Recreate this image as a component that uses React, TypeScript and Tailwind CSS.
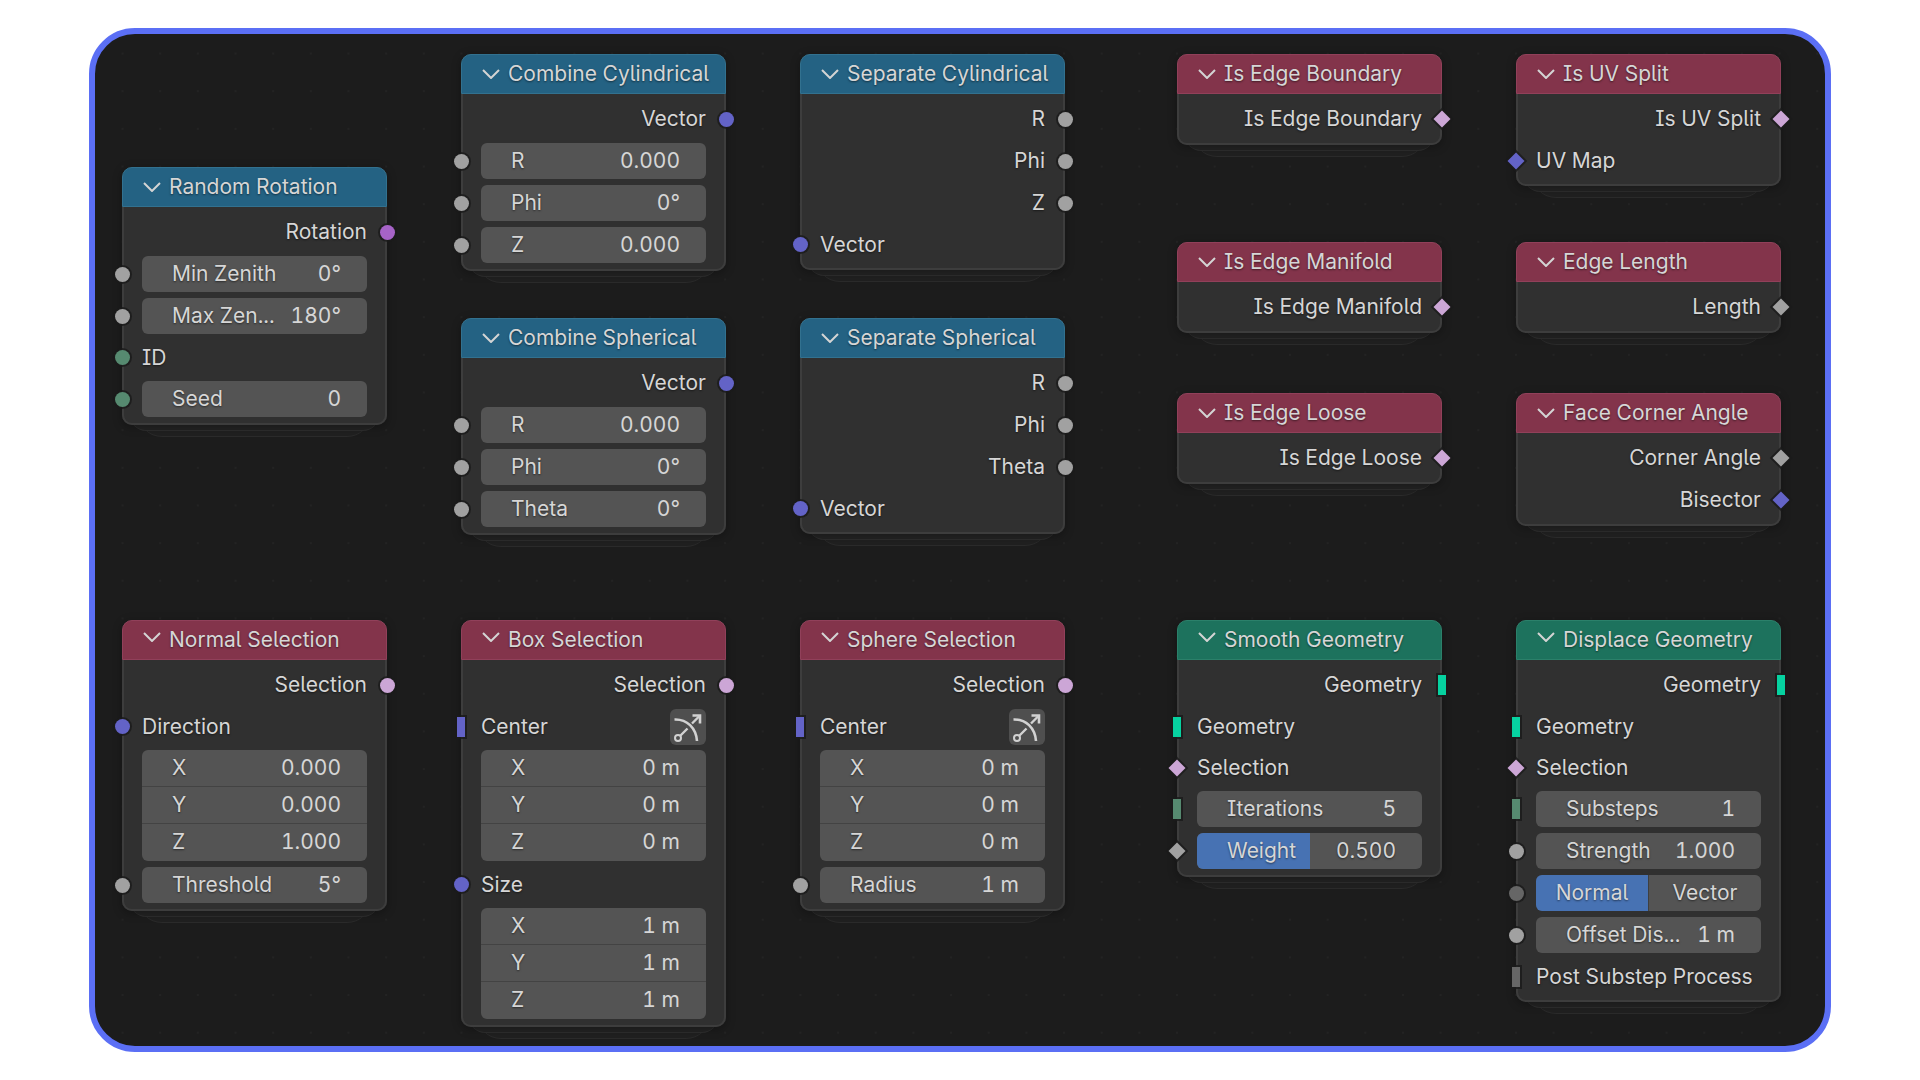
import type React from "react"
import { useId, useState } from "react"
import clsx from "clsx"

type Kind = "float" | "int" | "bool" | "vector" | "rotation" | "geometry" | "menu"
type Shape = "circle" | "diamond" | "bar"

interface SocketType {
  kind: Kind
  shape: Shape
}

type Row =
  | { type: "output"; label: string; socket: SocketType }
  | { type: "input"; label: string; socket: SocketType; gizmo?: boolean }
  | { type: "field"; label: string; value: string; socket: SocketType }
  | { type: "slider"; label: string; value: number; socket: SocketType }
  | { type: "xyz"; values: string[] }
  | { type: "choice"; options: string[]; socket: SocketType }

interface NodeData {
  title: string
  color: "blue" | "red" | "green"
  x: number
  y: number
  raised?: boolean
  rows: Row[]
}

const s = (kind: Kind, shape: Shape = "circle"): SocketType => ({ kind, shape })
const out = (label: string, socket: SocketType): Row => ({ type: "output", label, socket })
const inp = (label: string, socket: SocketType, gizmo = false): Row => ({ type: "input", label, socket, gizmo })
const field = (label: string, value: string, socket: SocketType): Row => ({ type: "field", label, value, socket })
const xyz = (...values: string[]): Row => ({ type: "xyz", values })

const nodes: NodeData[] = [
  {
    title: "Random Rotation",
    color: "blue",
    x: 27,
    y: 133,
    rows: [
      out("Rotation", s("rotation")),
      field("Min Zenith", "0°", s("float")),
      field("Max Zen...", "180°", s("float")),
      inp("ID", s("int")),
      field("Seed", "0", s("int")),
    ],
  },
  {
    title: "Combine Cylindrical",
    color: "blue",
    x: 366,
    y: 20,
    rows: [
      out("Vector", s("vector")),
      field("R", "0.000", s("float")),
      field("Phi", "0°", s("float")),
      field("Z", "0.000", s("float")),
    ],
  },
  {
    title: "Combine Spherical",
    color: "blue",
    x: 366,
    y: 284,
    rows: [
      out("Vector", s("vector")),
      field("R", "0.000", s("float")),
      field("Phi", "0°", s("float")),
      field("Theta", "0°", s("float")),
    ],
  },
  {
    title: "Separate Cylindrical",
    color: "blue",
    x: 705,
    y: 20,
    rows: [out("R", s("float")), out("Phi", s("float")), out("Z", s("float")), inp("Vector", s("vector"))],
  },
  {
    title: "Separate Spherical",
    color: "blue",
    x: 705,
    y: 284,
    rows: [out("R", s("float")), out("Phi", s("float")), out("Theta", s("float")), inp("Vector", s("vector"))],
  },
  { title: "Is Edge Boundary", color: "red", x: 1082, y: 20, rows: [out("Is Edge Boundary", s("bool", "diamond"))] },
  { title: "Is Edge Manifold", color: "red", x: 1082, y: 208, rows: [out("Is Edge Manifold", s("bool", "diamond"))] },
  { title: "Is Edge Loose", color: "red", x: 1082, y: 359, rows: [out("Is Edge Loose", s("bool", "diamond"))] },
  {
    title: "Is UV Split",
    color: "red",
    x: 1421,
    y: 20,
    rows: [out("Is UV Split", s("bool", "diamond")), inp("UV Map", s("vector", "diamond"))],
  },
  { title: "Edge Length", color: "red", x: 1421, y: 208, rows: [out("Length", s("float", "diamond"))] },
  {
    title: "Face Corner Angle",
    color: "red",
    x: 1421,
    y: 359,
    rows: [out("Corner Angle", s("float", "diamond")), out("Bisector", s("vector", "diamond"))],
  },
  {
    title: "Normal Selection",
    color: "red",
    x: 27,
    y: 586,
    raised: true,
    rows: [
      out("Selection", s("bool")),
      inp("Direction", s("vector")),
      xyz("0.000", "0.000", "1.000"),
      field("Threshold", "5°", s("float")),
    ],
  },
  {
    title: "Box Selection",
    color: "red",
    x: 366,
    y: 586,
    raised: true,
    rows: [
      out("Selection", s("bool")),
      inp("Center", s("vector", "bar"), true),
      xyz("0 m", "0 m", "0 m"),
      inp("Size", s("vector")),
      xyz("1 m", "1 m", "1 m"),
    ],
  },
  {
    title: "Sphere Selection",
    color: "red",
    x: 705,
    y: 586,
    raised: true,
    rows: [
      out("Selection", s("bool")),
      inp("Center", s("vector", "bar"), true),
      xyz("0 m", "0 m", "0 m"),
      field("Radius", "1 m", s("float")),
    ],
  },
  {
    title: "Smooth Geometry",
    color: "green",
    x: 1082,
    y: 586,
    raised: true,
    rows: [
      out("Geometry", s("geometry", "bar")),
      inp("Geometry", s("geometry", "bar")),
      inp("Selection", s("bool", "diamond")),
      field("Iterations", "5", s("int", "bar")),
      { type: "slider", label: "Weight", value: 0.5, socket: s("float", "diamond") },
    ],
  },
  {
    title: "Displace Geometry",
    color: "green",
    x: 1421,
    y: 586,
    raised: true,
    rows: [
      out("Geometry", s("geometry", "bar")),
      inp("Geometry", s("geometry", "bar")),
      inp("Selection", s("bool", "diamond")),
      field("Substeps", "1", s("int", "bar")),
      field("Strength", "1.000", s("float")),
      { type: "choice", options: ["Normal", "Vector"], socket: s("menu") },
      field("Offset Dis...", "1 m", s("float")),
      inp("Post Substep Process", s("menu", "bar")),
    ],
  },
]

const socketColors: Record<Kind, string> = {
  float: "bg-[#a1a1a1]",
  int: "bg-[#568a70]",
  bool: "bg-[#cca6d6]",
  vector: "bg-[#6363c7]",
  rotation: "bg-[#a663c7]",
  geometry: "bg-[#06d2a0]",
  menu: "bg-[#666666]",
}

const socketShapes: Record<Shape, string> = {
  circle: "size-[15px] rounded-full",
  diamond: "size-3 rotate-45",
  bar: "h-5 w-2",
}

const headerColors = {
  blue: "bg-[#246283] border-[#32718f]",
  red: "bg-[#83344b] border-[#91405a]",
  green: "bg-[#1d725d] border-[#2b806a]",
}

function Socket({ socket, side }: { socket: SocketType; side: "left" | "right" }) {
  return (
    <span
      className={clsx(
        "absolute inset-y-0 flex w-5 items-center justify-center",
        side === "left" ? "-left-[30px]" : "-right-[30px]",
      )}
    >
      <span className={clsx("ring-2 ring-[#1a1a1a]/80", socketColors[socket.kind], socketShapes[socket.shape])} />
    </span>
  )
}

function NumberField({ label, value, className }: { label: string; value: string; className?: string }) {
  const [text, setText] = useState(value)
  return (
    <label className={clsx("flex items-center justify-between bg-[#545454] pr-[26px] pl-[30px]", className)}>
      <span className="whitespace-nowrap">{label}</span>
      <input
        type="text"
        value={text}
        onChange={(e: React.ChangeEvent<HTMLInputElement>) => setText(e.target.value)}
        className="field-sizing-content bg-transparent text-right outline-none"
      />
    </label>
  )
}

function SliderField({ label, value }: { label: string; value: number }) {
  const [amount, setAmount] = useState(value)
  return (
    <label className="relative flex h-9 items-center justify-between overflow-hidden rounded-md bg-[#545454] pr-[26px] pl-[30px]">
      <span className="absolute inset-y-0 left-0 bg-[#4772b3]" style={{ width: `${amount * 100}%` }} />
      <span className="relative">{label}</span>
      <span className="relative">{amount.toFixed(3)}</span>
      <input
        type="range"
        min={0}
        max={1}
        step={0.001}
        value={amount}
        onChange={(e) => setAmount(Number(e.target.value))}
        className="absolute inset-0 size-full cursor-ew-resize opacity-0"
      />
    </label>
  )
}

function ChoiceField({ options }: { options: string[] }) {
  const name = useId()
  const [selected, setSelected] = useState(options[0])
  return (
    <div role="radiogroup" className="flex h-9 gap-px overflow-hidden rounded-md bg-[#3f3f3f]">
      {options.map((option) => (
        <label
          key={option}
          className={clsx(
            "relative flex flex-1 items-center justify-center",
            option === selected ? "bg-[#4772b3]" : "bg-[#545454]",
          )}
        >
          <input
            type="radio"
            name={name}
            checked={option === selected}
            onChange={() => setSelected(option)}
            className="absolute inset-0 opacity-0"
          />
          {option}
        </label>
      ))}
    </div>
  )
}

function GizmoIcon() {
  return (
    <svg viewBox="0 0 36 36" className="size-9" fill="none" stroke="#d2d2d2" strokeWidth="2">
      <path d="M4.5 10.5C17 10 26 19 27 32" strokeWidth="2.6" />
      <circle cx="8" cy="29" r="3" />
      <path d="M10.5 26.5 17.5 19.5M22 14.5 29.5 7" strokeWidth="2.4" />
      <path d="M22.5 6.5H30V14.500" strokeWidth="2.6" />
    </svg>
  )
}

function NodeRow({ row }: { row: Row }) {
  switch (row.type) {
    case "output":
      return (
        <div className="relative flex h-9 items-center justify-end whitespace-nowrap">
          {row.label}
          <Socket socket={row.socket} side="right" />
        </div>
      )
    case "input":
      return (
        <div className="relative flex h-[35px] items-center justify-between whitespace-nowrap">
          <Socket socket={row.socket} side="left" />
          {row.label}
          {row.gizmo && (
            <button type="button" aria-label="Pin gizmo" className="rounded-md bg-[#4f4f4f]">
              <GizmoIcon />
            </button>
          )}
        </div>
      )
    case "field":
      return (
        <div className="relative">
          <Socket socket={row.socket} side="left" />
          <NumberField label={row.label} value={row.value} className="h-9 rounded-md" />
        </div>
      )
    case "slider":
      return (
        <div className="relative">
          <Socket socket={row.socket} side="left" />
          <SliderField label={row.label} value={row.value} />
        </div>
      )
    case "choice":
      return (
        <div className="relative">
          <Socket socket={row.socket} side="left" />
          <ChoiceField options={row.options} />
        </div>
      )
    case "xyz":
      return (
        <div className="overflow-hidden rounded-md">
          {row.values.map((value, i) => (
            <NumberField
              key={i}
              label={"XYZ"[i]}
              value={value}
              className="h-[37px] border-b border-[#434343] last:border-transparent"
            />
          ))}
        </div>
      )
  }
}

function Node({ node }: { node: NodeData }) {
  return (
    <article className="absolute w-[265px]" style={{ left: node.x, top: node.y }}>
      {/* stacked edges peeking out under the node */}
      <div className="absolute inset-x-4 -bottom-3 h-6 rounded-b-3xl border-b border-[#2b2b2b] bg-[#202020]" />
      <div className="absolute inset-x-2 -bottom-1.5 h-6 rounded-b-2xl border-b border-[#2e2e2e] bg-[#232323]" />
      <div className="relative rounded-[10px] bg-[#303030] shadow-[0_2px_8px_1px_rgba(0,0,0,0.25)]">
        <header
          className={clsx("flex h-10 items-center rounded-t-[10px] border pl-5 whitespace-nowrap", headerColors[node.color])}
        >
          <button type="button" aria-label="Collapse" className={clsx("mr-2", node.raised && "pb-1.5")}>
            <svg viewBox="0 0 18 10" className="h-2.5 w-[18px]" fill="none" stroke="#d4d4d4" strokeWidth="2">
              <path d="M1 1 9 9 17 1" />
            </svg>
          </button>
          <h2>{node.title}</h2>
        </header>
        <div className="flex flex-col gap-1.5 rounded-b-[10px] border-x-2 border-b-2 border-[#3d3d3d] px-[18px] pt-[7px] pb-1.5">
          {node.rows.map((row, i) => (
            <NodeRow key={i} row={row} />
          ))}
        </div>
      </div>
    </article>
  )
}

function DotGrid() {
  return (
    <svg className="absolute inset-0 size-full" aria-hidden="true">
      <defs>
        <pattern id="dots" x="8.700" y="0.700" width="37.660" height="37.660" patternUnits="userSpaceOnUse">
          <circle cx="18.830" cy="18.830" r="1" fill="#252525" />
        </pattern>
      </defs>
      <rect width="100%" height="100%" fill="url(#dots)" />
    </svg>
  )
}

export default function App() {
  return (
    <main className="flex min-h-screen bg-white px-[89px] py-7 font-['Inter','Liberation_Sans',sans-serif] text-[21px] leading-6 text-[#d6d6d6] [font-feature-settings:'cv05','cv08','tnum'] [text-shadow:0_1px_2px_rgba(0,0,0,0.5)]">
      <section aria-label="Node editor" className="relative flex-1 overflow-auto rounded-[46px] border-[6px] border-[#5b6ff5] bg-[#1c1c1c]">
        <DotGrid />
        {nodes.map((node) => (
          <Node key={node.title} node={node} />
        ))}
      </section>
    </main>
  )
}
